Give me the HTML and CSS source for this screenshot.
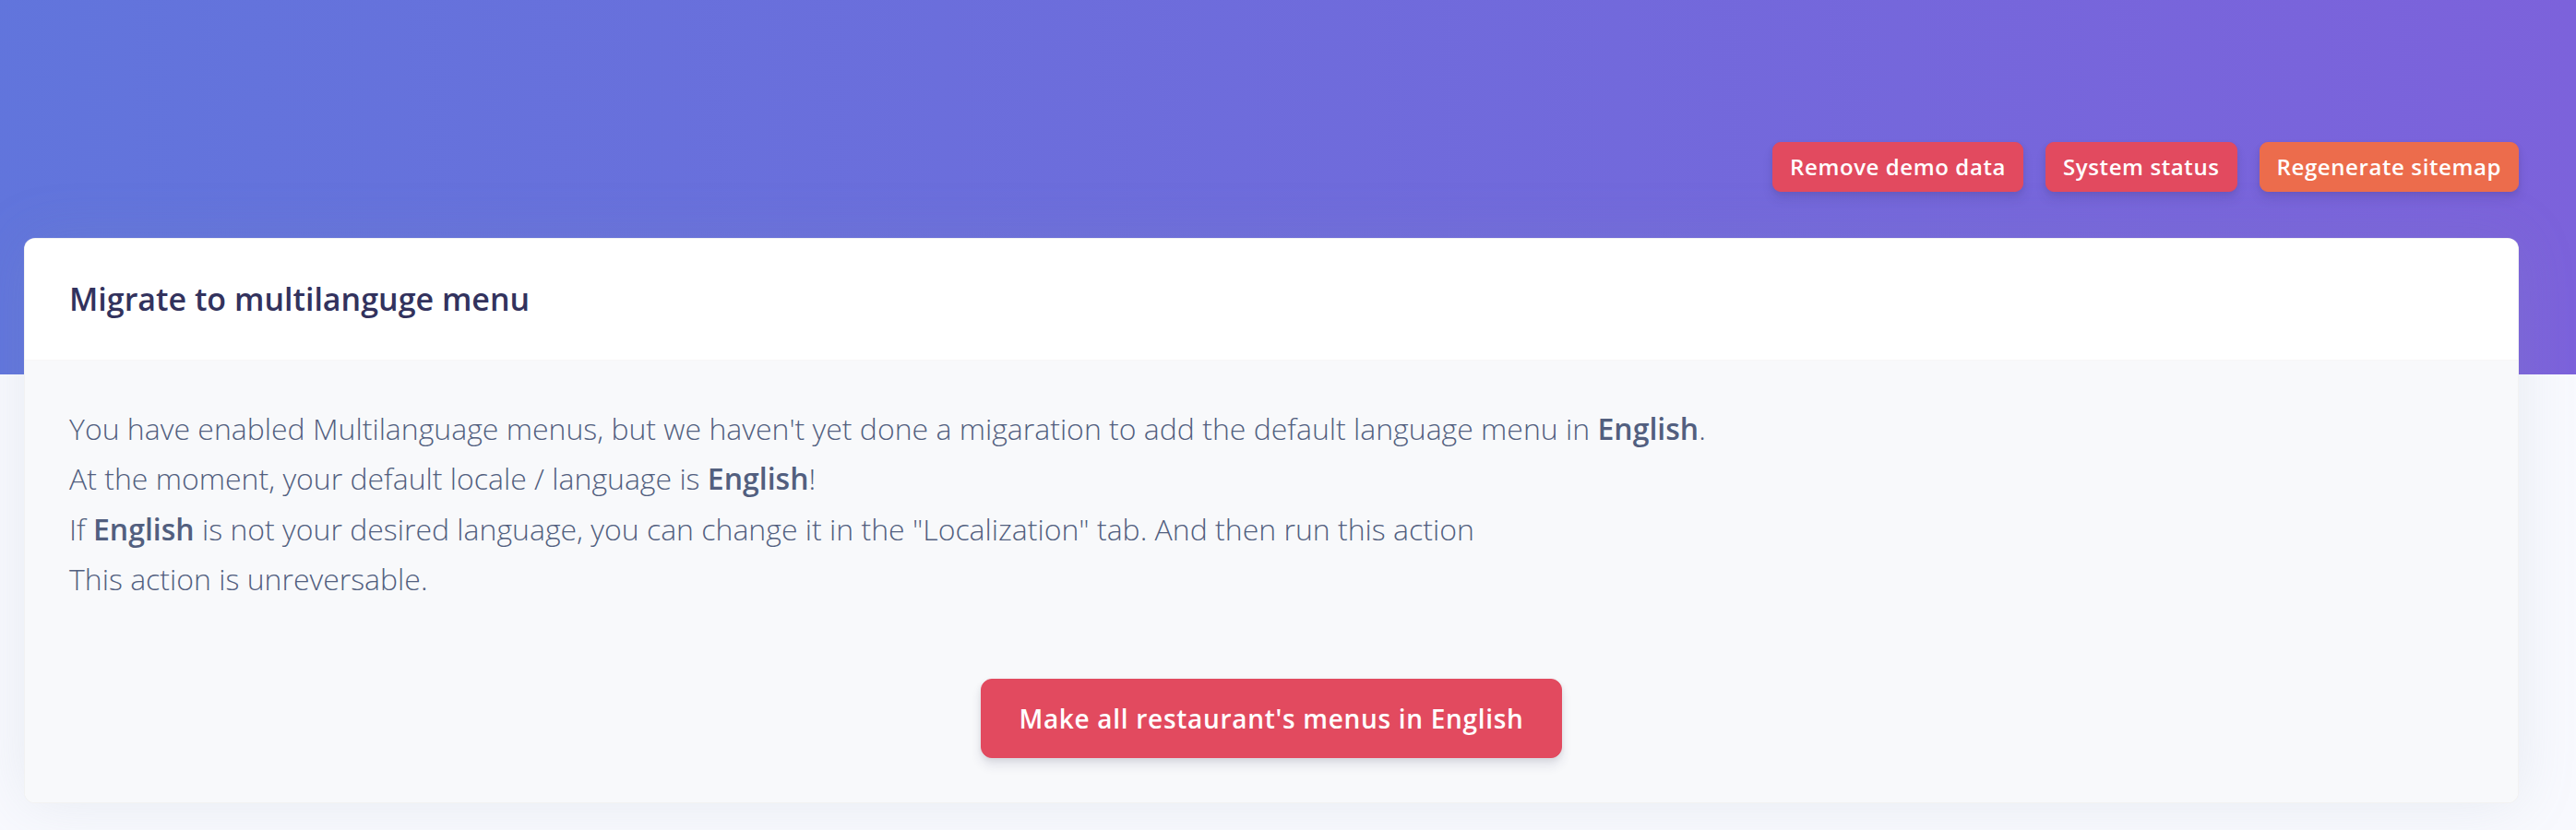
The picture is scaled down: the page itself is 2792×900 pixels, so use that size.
FILE: index.html
```html
<!DOCTYPE html>
<html lang="en">
<head>
<meta charset="utf-8">
<title>Migrate to multilanguge menu</title>
<link rel="stylesheet" href="styles.css">
</head>
<body>
<header class="header">
  <div class="header-actions">
    <button class="btn btn-sm btn-danger">Remove demo data</button>
    <button class="btn btn-sm btn-danger">System status</button>
    <button class="btn btn-sm btn-warning">Regenerate sitemap</button>
  </div>
</header>
<main class="content">
  <section class="card">
    <div class="card-header">
      <h3 class="card-title">Migrate to multilanguge menu</h3>
    </div>
    <div class="card-body">
      <p class="card-text">You have enabled Multilanguage menus, but we haven't yet done a migaration to add the default language menu in <strong>English</strong>.<br>At the moment, your default locale / language is <strong>English</strong>!<br>If <strong>English</strong> is not your desired language, you can change it in the "Localization" tab. And then run this action<br>This action is unreversable.</p>
      <div class="card-actions">
        <button class="btn btn-danger btn-lg">Make all restaurant's menus in English</button>
      </div>
    </div>
  </section>
</main>
</body>
</html>
```

FILE: styles.css
```css
* { box-sizing: border-box; }

html, body {
  margin: 0;
  padding: 0;
}

body {
  background: #f8f9fe;
  font-family: "Open Sans", "Noto Sans", sans-serif;
  color: #525f7f;
  min-height: 900px;
}

.header {
  height: 406px;
  padding: 154px 62px 0 26px;
  background: linear-gradient(87deg, #6175dc 0%, #7c62db 100%);
}

.header-actions {
  display: flex;
  justify-content: flex-end;
  gap: 24px;
}

.btn {
  font-family: "Open Sans", "Noto Sans", sans-serif;
  font-weight: 600;
  letter-spacing: .025em;
  color: #fff;
  border: 1px solid transparent;
  cursor: pointer;
  box-shadow: 0 8px 12px rgba(50, 50, 93, .11), 0 2px 6px rgba(0, 0, 0, .08);
  white-space: nowrap;
}

.btn-sm {
  font-size: 24px;
  line-height: 36px;
  padding: 8px 18px;
  border-radius: 9px;
}

.btn-lg {
  font-size: 28px;
  line-height: 42px;
  padding: 21px 40px;
  border-radius: 12px;
}

.btn-danger {
  background: #e24a5f;
  border-color: #e24a5f;
}

.btn-warning {
  background: #ec6c4c;
  border-color: #ec6c4c;
}

.content {
  margin: -148px 62px 0 26px;
}

.card {
  background: #fff;
  border: 1px solid rgba(0, 0, 0, .05);
  border-radius: 12px;
  box-shadow: 0 0 64px 0 rgba(136, 152, 170, .15);
  overflow: hidden;
}

.card-header {
  background: #fff;
  padding: 40px 48px;
  border-bottom: 1px solid rgba(0, 0, 0, .03);
}

.card-title {
  margin: 0;
  font-size: 34px;
  line-height: 51px;
  font-weight: 600;
  color: #32325d;
}

.card-body {
  background: #f8f9fb;
  padding: 47px 48px 48px;
}

.card-text {
  margin: 0 0 32px;
  font-size: 32px;
  line-height: 54.4px;
  font-weight: 300;
  color: #525f7f;
}

.card-text strong {
  font-weight: 600;
}

.card-actions {
  display: flex;
  justify-content: center;
  padding-top: 48px;
}
```
